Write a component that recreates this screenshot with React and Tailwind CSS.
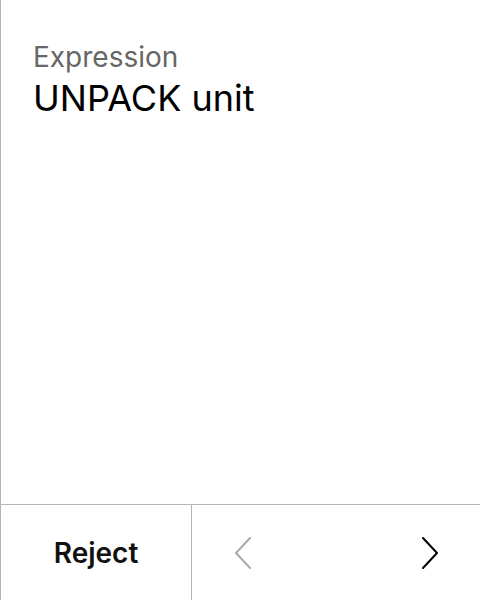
const Chevron = ({ dir, color }) => (
  <svg width="18" height="32" viewBox="0 0 18 32" fill="none">
    <polyline
      points={dir === "left" ? "16,1 2,16 16,31" : "2,1 16,16 2,31"}
      stroke={color}
      strokeWidth="2"
      strokeLinecap="round"
      strokeLinejoin="round"
    />
  </svg>
);

export default function App() {
  return (
    <div
      className="w-[480px] h-[600px] flex flex-col bg-white border-l border-[#b4b4b4]"
      style={{ fontFamily: "Inter, 'Noto Sans', sans-serif" }}
    >
      <div className="flex-1 pl-[32px] pt-[39px]">
        <div className="text-[28px] leading-[36px] text-[#666666]">Expression</div>
        <div className="mt-[3px] text-[36px] leading-[40px] text-black">UNPACK unit</div>
      </div>
      <div className="h-[96px] flex border-t border-[#b4b4b4]">
        <button className="w-[191px] border-r border-[#b4b4b4] flex items-center justify-center text-[28px] leading-[32px] font-semibold text-[#111]">
          Reject
        </button>
        <div className="flex-1 flex justify-between">
          <button className="w-[102px] flex items-center justify-center">
            <Chevron dir="left" color="#aaaaaa" />
          </button>
          <button className="w-[100px] flex items-center justify-center">
            <Chevron dir="right" color="#000000" />
          </button>
        </div>
      </div>
    </div>
  );
}
